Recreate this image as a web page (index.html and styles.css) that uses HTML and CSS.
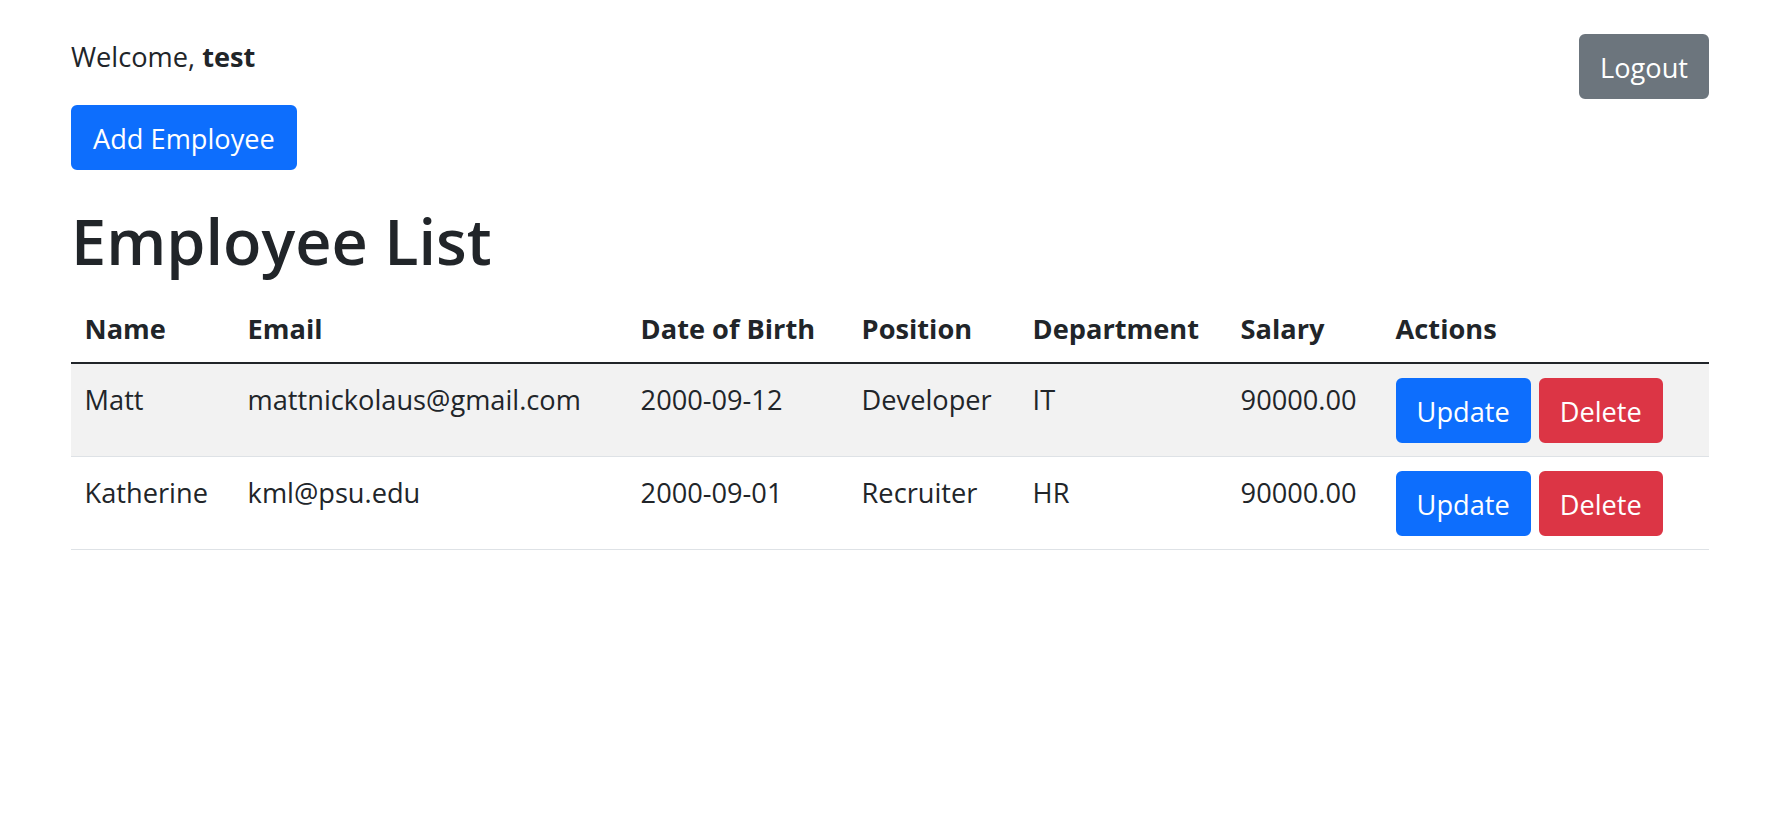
FILE: index.html
```html
<!DOCTYPE html>
<html lang="en">
<head>
<meta charset="utf-8">
<title>Employee List</title>
<link rel="stylesheet" href="styles.css">
</head>
<body>
<div class="page">
  <div class="topbar">
    <div class="welcome">Welcome, <strong>test</strong></div>
    <button class="btn btn-secondary">Logout</button>
  </div>
  <button class="btn btn-primary add-btn">Add Employee</button>
  <h1 class="title">Employee List</h1>
  <table class="emp-table">
    <colgroup>
      <col class="c-name">
      <col class="c-email">
      <col class="c-dob">
      <col class="c-pos">
      <col class="c-dept">
      <col class="c-sal">
      <col class="c-act">
    </colgroup>
    <thead>
      <tr>
        <th>Name</th>
        <th>Email</th>
        <th>Date of Birth</th>
        <th>Position</th>
        <th>Department</th>
        <th>Salary</th>
        <th>Actions</th>
      </tr>
    </thead>
    <tbody>
      <tr class="striped">
        <td>Matt</td>
        <td>mattnickolaus@gmail.com</td>
        <td>2000-09-12</td>
        <td>Developer</td>
        <td>IT</td>
        <td>90000.00</td>
        <td class="act-cell"><div class="actions"><button class="btn btn-primary">Update</button><button class="btn btn-danger">Delete</button></div></td>
      </tr>
      <tr>
        <td>Katherine</td>
        <td>kml@psu.edu</td>
        <td>2000-09-01</td>
        <td>Recruiter</td>
        <td>HR</td>
        <td>90000.00</td>
        <td class="act-cell"><div class="actions"><button class="btn btn-primary">Update</button><button class="btn btn-danger">Delete</button></div></td>
      </tr>
    </tbody>
  </table>
</div>
</body>
</html>
```

FILE: styles.css
```css
* { box-sizing: border-box; }

html, body {
  margin: 0;
  padding: 0;
  background: #ffffff;
}

body {
  font-family: "Open Sans", "Noto Sans", sans-serif;
  font-size: 27.2px;
  line-height: 40.8px;
  color: #212529;
}

.page {
  padding: 34px 63px 0 71px;
}

.topbar {
  display: flex;
  justify-content: space-between;
  align-items: flex-start;
}

.welcome {
  margin-top: 3px;
}

.welcome strong {
  font-weight: 700;
}

.btn {
  display: inline-block;
  font-family: inherit;
  font-size: 27.2px;
  line-height: 40.8px;
  font-weight: 400;
  color: #ffffff;
  padding: 12px 19px 8px;
  border: 2px solid transparent;
  border-radius: 6px;
  cursor: pointer;
}

.btn-primary {
  background: #0d6efd;
  border-color: #0d6efd;
}

.btn-secondary {
  background: #6c757d;
  border-color: #6c757d;
}

.btn-danger {
  background: #dc3545;
  border-color: #dc3545;
}

.add-btn {
  margin-top: 6px;
  margin-bottom: 27px;
  padding-left: 20px;
  padding-right: 20px;
}

.title {
  margin: 0 0 13.6px;
  padding-top: 3px;
  font-size: 63px;
  line-height: 81px;
  font-weight: 600;
  color: #212529;
}

.emp-table {
  width: 100%;
  border-collapse: collapse;
  table-layout: fixed;
}

.c-name { width: 163px; }
.c-email { width: 393px; }
.c-dob { width: 221px; }
.c-pos { width: 171px; }
.c-dept { width: 208px; }
.c-sal { width: 155px; }
.c-act { width: auto; }

.emp-table th,
.emp-table td {
  text-align: left;
  vertical-align: top;
  white-space: nowrap;
}

.emp-table th {
  padding: 14.6px 13.6px 12.6px;
  font-weight: 700;
  border-bottom: 2px solid #212529;
}

.emp-table td {
  padding: 15.6px 13.6px 11.6px;
  border-bottom: 1px solid #dee2e6;
}

.emp-table td.act-cell {
  padding: 13.6px;
}

.emp-table tr.striped td {
  background: #f2f2f2;
}

.actions {
  display: flex;
  gap: 8px;
}
```
